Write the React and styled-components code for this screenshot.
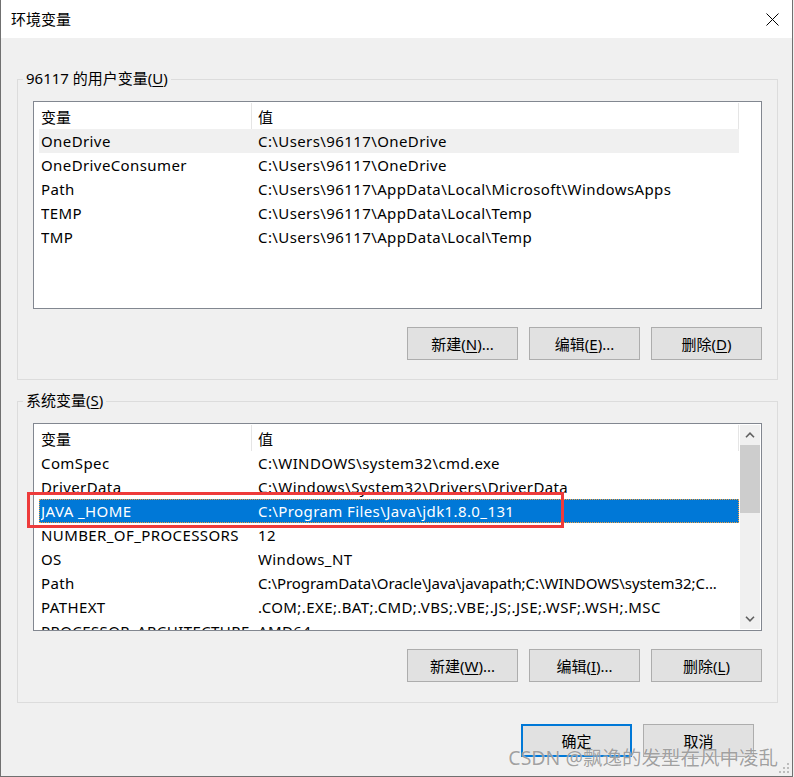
import React from "react";
import styled, { createGlobalStyle } from "styled-components";

const Global = createGlobalStyle`
  html, body { margin: 0; padding: 0; background: #f0f0f0; }
  body {
    font-family: "Noto Sans", "Noto Sans CJK SC", sans-serif;
    font-size: 15px;
    color: #000;
  }
`;

const Window = styled.div`
  position: relative;
  width: 793px;
  height: 777px;
  box-sizing: border-box;
  border: 1px solid #707070;
  border-top: none;
  display: flex;
  flex-direction: column;
  background: #f0f0f0;
  overflow: hidden;
`;

const TitleBar = styled.div`
  height: 38px;
  flex-shrink: 0;
  background: #fff;
  display: flex;
  align-items: center;
  justify-content: space-between;
  padding: 0 13px 0 10px;
`;

const Title = styled.span`
  font-size: 15px;
  line-height: 20px;
`;

const Body = styled.div`
  flex: 1;
  padding: 41px 14px 0 16px;
  display: flex;
  flex-direction: column;
`;

const Group = styled.div`
  position: relative;
  border: 1px solid #dcdcdc;
  padding: 21px 15px ${(p) => p.$bottom}px 15px;
  margin-top: ${(p) => p.$top}px;
  display: flex;
  flex-direction: column;
`;

const GroupTitle = styled.span`
  position: absolute;
  top: -12px;
  left: 5px;
  padding: 0 3px;
  background: #f0f0f0;
  line-height: 20px;
`;

const ListBox = styled.div`
  height: 208px;
  box-sizing: border-box;
  border: 1px solid #828790;
  background: #fff;
  display: flex;
`;

const ListContent = styled.div`
  width: 700px;
  padding-left: 5px;
  overflow: hidden;
  display: flex;
  flex-direction: column;
`;

const Header = styled.div`
  height: 27px;
  flex-shrink: 0;
  display: flex;
`;

const HeaderCell = styled.div`
  box-sizing: border-box;
  width: ${(p) => p.$w}px;
  height: 26px;
  margin-top: 1px;
  padding: 2px 0 0 ${(p) => p.$pl}px;
  line-height: 24px;
  border-right: 1px solid #e5e5e5;
`;

const Row = styled.div`
  flex-shrink: 0;
  height: 24px;
  line-height: 24px;
  display: grid;
  grid-template-columns: 217px 1fr;
  padding-left: 2px;
  white-space: nowrap;
  letter-spacing: 0.4px;
  background: ${(p) => (p.$selected ? "#0078d7" : p.$hover ? "#f0f0f0" : "transparent")};
  color: ${(p) => (p.$selected ? "#fff" : "#000")};
  outline: ${(p) => (p.$selected ? "1px dotted #f0a040" : "none")};
  outline-offset: -1px;
`;

const NameCell = styled.span`
  width: 210px;
  overflow: hidden;
`;

const ValueCell = styled.span`
  overflow: hidden;
  letter-spacing: ${(p) => (p.$tight ? "-0.05px" : "inherit")};
`;

const Scrollbar = styled.div`
  width: 20px;
  margin: 1px 1px 1px 1px;
  background: #f0f0f0;
  display: flex;
  flex-direction: column;
`;

const ScrollArrow = styled.div`
  height: 20px;
  flex-shrink: 0;
  display: flex;
  align-items: center;
  justify-content: center;
`;

const ScrollTrack = styled.div`
  flex: 1;
`;

const ScrollThumb = styled.div`
  height: 68px;
  background: #cdcdcd;
`;

const ButtonRow = styled.div`
  margin-top: ${(p) => p.$top}px;
  display: flex;
  justify-content: flex-end;
  gap: 11px;
  padding-right: ${(p) => p.$right || 0}px;
`;

const Button = styled.button`
  width: 111px;
  height: 33px;
  box-sizing: border-box;
  background: #e1e1e1;
  border: ${(p) => (p.$default ? "2px solid #0078d7" : "1px solid #adadad")};
  border-radius: 0;
  font-family: inherit;
  font-size: 15px;
  color: #000;
  padding: 0;
  line-height: 20px;
`;

const U = styled.span`
  text-decoration: underline;
  text-underline-offset: 2px;
`;

const Highlight = styled.div`
  position: absolute;
  left: 26px;
  top: 492px;
  width: 537px;
  height: 36px;
  box-sizing: border-box;
  border: 3px solid #ee3b3b;
  pointer-events: none;
`;

const Watermark = styled.div`
  position: absolute;
  right: 14px;
  bottom: 7px;
  font-size: 19.5px;
  line-height: 22px;
  color: rgba(120, 120, 120, 0.7);
  text-shadow: 0 0 1px rgba(255, 255, 255, 0.9);
  white-space: nowrap;
  pointer-events: none;
`;

const Grip = styled.svg`
  position: absolute;
  right: 2px;
  bottom: 2px;
`;

const CloseIcon = () => (
  <svg width="13" height="13" viewBox="0 0 13 13">
    <path d="M0.5 0.5 L12.5 12.5 M12.5 0.5 L0.5 12.5" stroke="#000" strokeWidth="1" fill="none" />
  </svg>
);

const Chevron = ({ up }) => (
  <svg width="10" height="6" viewBox="0 0 10 6">
    <path
      d={up ? "M1 5.2 L5 1.2 L9 5.2" : "M1 0.8 L5 4.8 L9 0.8"}
      stroke="#606060"
      strokeWidth="1.6"
      fill="none"
    />
  </svg>
);

const userVars = [
  ["OneDrive", "C:\\Users\\96117\\OneDrive"],
  ["OneDriveConsumer", "C:\\Users\\96117\\OneDrive"],
  ["Path", "C:\\Users\\96117\\AppData\\Local\\Microsoft\\WindowsApps"],
  ["TEMP", "C:\\Users\\96117\\AppData\\Local\\Temp"],
  ["TMP", "C:\\Users\\96117\\AppData\\Local\\Temp"],
];

const sysVars = [
  ["ComSpec", "C:\\WINDOWS\\system32\\cmd.exe"],
  ["DriverData", "C:\\Windows\\System32\\Drivers\\DriverData"],
  ["JAVA _HOME", "C:\\Program Files\\Java\\jdk1.8.0_131"],
  ["NUMBER_OF_PROCESSORS", "12"],
  ["OS", "Windows_NT"],
  ["Path", "C:\\ProgramData\\Oracle\\Java\\javapath;C:\\WINDOWS\\system32;C...", true],
  ["PATHEXT", ".COM;.EXE;.BAT;.CMD;.VBS;.VBE;.JS;.JSE;.WSF;.WSH;.MSC"],
  ["PROCESSOR_ARCHITECTURE", "AMD64"],
];

const VarList = ({ rows, hoverIndex, selectedIndex, scroll }) => (
  <ListBox>
    <ListContent>
      <Header>
        <HeaderCell $w={213} $pl={2}>变量</HeaderCell>
        <HeaderCell $w={487} $pl={6}>值</HeaderCell>
      </Header>
      {rows.map(([n, v, tight], i) => (
        <Row key={n + i} $hover={i === hoverIndex} $selected={i === selectedIndex}>
          <NameCell>{n}</NameCell>
          <ValueCell $tight={tight}>{v}</ValueCell>
        </Row>
      ))}
    </ListContent>
    {scroll && (
      <Scrollbar>
        <ScrollArrow>
          <Chevron up />
        </ScrollArrow>
        <ScrollThumb />
        <ScrollTrack />
        <ScrollArrow>
          <Chevron />
        </ScrollArrow>
      </Scrollbar>
    )}
  </ListBox>
);

export default function App() {
  return (
    <>
      <Global />
      <Window>
        <TitleBar>
          <Title>环境变量</Title>
          <CloseIcon />
        </TitleBar>
        <Body>
          <Group $top={0} $bottom={19}>
            <GroupTitle>
              96117 的用户变量(<U>U</U>)
            </GroupTitle>
            <VarList rows={userVars} hoverIndex={0} />
            <ButtonRow $top={18}>
              <Button>新建(<U>N</U>)...</Button>
              <Button>编辑(<U>E</U>)...</Button>
              <Button>删除(<U>D</U>)</Button>
            </ButtonRow>
          </Group>
          <Group $top={21} $bottom={20}>
            <GroupTitle>
              系统变量(<U>S</U>)
            </GroupTitle>
            <VarList rows={sysVars} selectedIndex={2} scroll />
            <ButtonRow $top={18}>
              <Button>新建(<U>W</U>)...</Button>
              <Button>编辑(<U>I</U>)...</Button>
              <Button>删除(<U>L</U>)</Button>
            </ButtonRow>
          </Group>
          <ButtonRow $top={21} $right={24}>
            <Button $default>确定</Button>
            <Button>取消</Button>
          </ButtonRow>
        </Body>
        <Highlight />
        <Watermark>CSDN @飘逸的发型在风中凌乱</Watermark>
        <Grip width="12" height="12" viewBox="0 0 12 12">
          {[
            [9, 1],
            [5, 5],
            [9, 5],
            [1, 9],
            [5, 9],
            [9, 9],
          ].map(([x, y]) => (
            <rect key={x + "-" + y} x={x} y={y} width="2" height="2" fill="#bdbdbd" />
          ))}
        </Grip>
      </Window>
    </>
  );
}
